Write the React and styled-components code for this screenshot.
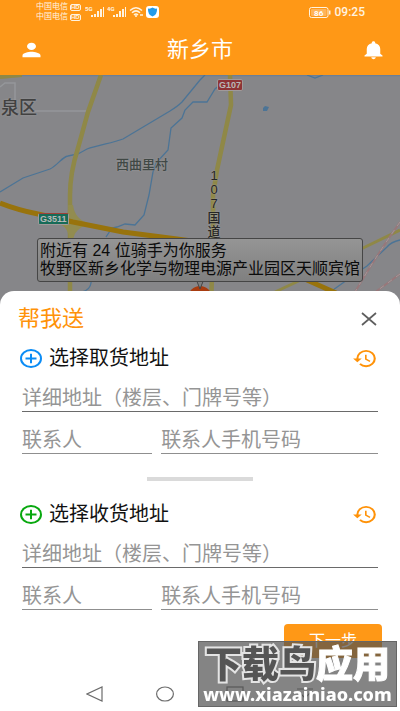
import React from "react";
import styled, { createGlobalStyle } from "styled-components";
import { MdHistory, MdNotifications, MdPerson } from "react-icons/md";

const GlobalStyle = createGlobalStyle`
  :root {
    --main: #ff9816;
    --text: #111;
    --hint: #959595;
  }
  * {
    box-sizing: border-box;
  }
  body {
    margin: 0;
    background: #fff;
    color: var(--text);
    font-family: "Liberation Sans", "Noto Sans CJK SC", sans-serif;
  }
  button,
  input {
    font-family: inherit;
  }
`;

const Screen = styled.div`
  display: flex;
  flex-direction: column;
  min-height: 100vh;
`;

/* status bar */
const StatusBar = styled.div`
  display: flex;
  align-items: center;
  justify-content: space-between;
  height: 24px;
  padding: 0 35px 0 36px;
  background: var(--main);
  color: #fff3e0;
`;
const StatusGroup = styled.div`
  display: flex;
  align-items: center;
  gap: ${(props) => props.$gap}px;
`;
const Carriers = styled.div`
  display: grid;
  margin-right: 2px;
  font-size: 8px;
  line-height: 10px;
`;
const Carrier = styled.span`
  display: flex;
  align-items: center;
  gap: 2px;
`;
const Hd = styled.span`
  border: 1px solid #fff3e0;
  border-radius: 2px;
  font-size: 6px;
  font-weight: 700;
  line-height: 5px;
`;
const Clock = styled.span`
  font-family: Roboto, sans-serif;
  font-size: 12px;
  font-weight: 500;
`;

/* header */
const Header = styled.header`
  display: grid;
  grid-template-columns: 1fr auto 1fr;
  align-items: center;
  height: 51px;
  padding: 0 13px 0 18px;
  background: var(--main);
  color: #fff;
`;
const City = styled.h1`
  margin: 0;
  padding-right: 5px;
  font-size: 22px;
  font-weight: 400;
  line-height: 30px;
`;
const IconButton = styled.button`
  display: flex;
  justify-self: ${(props) => (props.$end ? "end" : "start")};
  padding: 0;
  border: none;
  background: none;
  color: ${(props) => props.$color || "inherit"};
`;

/* map */
const Map = styled.main`
  position: relative;
  flex: 1 0 230px;
  margin-bottom: -16px;
  overflow: hidden;
  background: #868689;
`;
const MapDrawing = styled.svg`
  position: absolute;
  top: 0;
  left: 0;
  width: 100%;
  height: 100%;
`;
const Place = styled.span`
  position: absolute;
  top: ${(props) => props.$y}px;
  left: ${(props) => props.$x}px;
  color: ${(props) => props.$color || "#404845"};
  font-size: ${(props) => props.$size}px;
  line-height: 20px;
  font-weight: 500;
  text-shadow: 0 0 2px #a0a0a0;
`;
const RoadName = styled.span`
  position: absolute;
  top: 94px;
  left: 206px;
  width: 16px;
  color: #262626;
  font-size: 13px;
  font-weight: 500;
  line-height: 14px;
  text-align: center;
  text-shadow: 0 0 2px #a8a8a8;
`;
const RoadSign = styled.span`
  position: absolute;
  top: ${(props) => props.$y}px;
  left: ${(props) => props.$x}px;
  padding: 0 1px;
  border: 1px solid #a09a9a;
  border-top-color: ${(props) => props.$top || "#a09a9a"};
  border-radius: 2px;
  background: ${(props) => props.$color};
  color: #b8b8b8;
  font-size: 9px;
  font-weight: 700;
  line-height: 10px;
`;
const Bubble = styled.div`
  position: absolute;
  top: 163px;
  left: 50%;
  width: max-content;
  padding: 3px 2px;
  border: 1px solid #454545;
  border-radius: 3px;
  background: linear-gradient(#959595, #808080);
  color: #0b0b0b;
  font-size: 16px;
  line-height: 18px;
  transform: translateX(-50%);
`;

/* bottom sheet */
const Sheet = styled.section`
  position: relative;
  padding: 12px 18px 0;
  border-radius: 14px 14px 0 0;
  background: #fff;
`;
const SheetHead = styled.div`
  display: flex;
  align-items: center;
  justify-content: space-between;
  height: 32px;
  padding-right: 5px;
`;
const SheetTitle = styled.h2`
  margin: 0;
  color: #ff9208;
  font-size: 22px;
  font-weight: 400;
  line-height: 30px;
`;
const Address = styled.fieldset`
  min-width: 0;
  margin: 0;
  padding: 8px 4px 0;
  border: none;
`;
const AddressHead = styled.div`
  display: flex;
  align-items: center;
  justify-content: space-between;
  height: 30px;
  margin-left: -2px;
`;
const PickButton = styled.button`
  display: flex;
  align-items: center;
  gap: 7px;
  padding: 0;
  border: none;
  background: none;
  color: var(--text);
  font-size: 20px;
  line-height: 28px;
`;
const Fields = styled.div`
  display: grid;
  grid-template-columns: 3fr 5fr;
  column-gap: 9px;
`;
const Input = styled.input`
  grid-column: ${(props) => (props.$wide ? "1 / -1" : "auto")};
  width: 100%;
  min-width: 0;
  height: ${(props) => (props.$wide ? 39 : 42)}px;
  padding: ${(props) => (props.$wide ? 12 : 16)}px 0 0;
  border: none;
  border-bottom: 1px solid ${(props) => (props.$wide ? "#6a6a6a" : "#8f8f8f")};
  border-radius: 0;
  outline: none;
  background: transparent;
  font-size: 20px;
  line-height: 24px;
  &::placeholder {
    color: var(--hint);
    opacity: 1;
  }
`;
const Divider = styled.hr`
  width: 106px;
  height: 4px;
  margin: 23px auto 10px;
  border: none;
  background: #dadada;
`;
const Actions = styled.div`
  display: flex;
  justify-content: flex-end;
  padding-top: 14px;
`;
const NextButton = styled.button`
  width: 98px;
  height: 34px;
  padding: 0;
  border: none;
  border-radius: 4px;
  background: var(--main);
  color: #fff;
  font-size: 16px;
  line-height: 24px;
`;

const NavBar = styled.nav`
  display: flex;
  align-items: center;
  justify-content: center;
  gap: 52px;
  height: 34px;
  margin-top: 19px;
`;

const Watermark = styled.a`
  position: fixed;
  right: 3px;
  bottom: 4px;
  width: 199px;
  height: 66px;
  padding-top: 5px;
  border: 1px solid #666;
  background: rgba(80, 80, 80, 0.7);
  color: #fff;
  text-align: center;
  text-decoration: none;
  white-space: nowrap;
`;
const WatermarkName = styled.strong`
  display: block;
  font-size: 37px;
  font-weight: 900;
  line-height: 38px;
  -webkit-text-stroke: 1px #fff;
`;
const WatermarkDark = styled.span`
  color: #555;
  -webkit-text-stroke: 4px #e4e4e4;
  paint-order: stroke fill;
`;
const WatermarkUrl = styled.span`
  display: block;
  font-family: "Noto Sans", sans-serif;
  font-size: 18px;
  font-weight: 800;
  line-height: 18px;
`;

function Signal({ label }) {
  return (
    <svg width="20" height="12" viewBox="0 0 20 12" fill="#fff3e0">
      <text x="0" y="5" fontSize="6" fontWeight="700" fontFamily="Roboto, sans-serif">
        {label}
      </text>
      <path d="M6 9h2v2H6zM9 8h2v3H9zM12 5h2v6h-2zM15 3h2v8h-2zM18 1h1v10h-1z" />
    </svg>
  );
}

function Wifi() {
  return (
    <svg width="15" height="12" viewBox="0 0 15 12" fill="none" stroke="#fff3e0" strokeWidth="1.500">
      <path d="M1 4.500Q7-1 13 4.500M3 6.800Q7 3 11 6.800M5 9Q7 7 9 9" />
      <path d="M7 9v2M11 9h3" />
    </svg>
  );
}

function Shield() {
  return (
    <svg width="13" height="12" viewBox="0 0 13 12">
      <rect width="13" height="12" rx="3" fill="#fff" />
      <path d="M2 2.500Q4.500 3 6.500 1.500Q8.500 3 11 2.500Q11.500 8.500 6.500 10.500Q1.500 8.500 2 2.500Z" fill="#239bea" />
    </svg>
  );
}

function Battery() {
  return (
    <svg width="22" height="11" viewBox="0 0 22 11">
      <rect x=".5" y=".5" width="18.500" height="10" rx="2" fill="none" stroke="#fff3e0" />
      <rect x="2" y="2" width="15.500" height="7" rx="1" fill="#ffb459" />
      <rect x="20" y="3.500" width="1.500" height="4" fill="#fff3e0" />
      <text x="9.700" y="8.500" fontSize="8" fontWeight="700" fill="#fff" textAnchor="middle" fontFamily="Roboto, sans-serif">
        86
      </text>
    </svg>
  );
}

function PlusCircle({ color }) {
  return (
    <svg width="22" height="19" viewBox="0 0 22 19" fill="none" stroke={color} strokeWidth="2">
      <ellipse cx="11" cy="9.500" rx="10" ry="8.500" />
      <path d="M5.500 9.500h11M11 4.800v9.400" />
    </svg>
  );
}

function Close() {
  return (
    <svg width="16" height="14" viewBox="0 0 16 14" fill="none" stroke="#5e5e5e" strokeWidth="1.700">
      <path d="M1 1l14 12M15 1L1 13" />
    </svg>
  );
}

function MapView() {
  return (
    <Map>
      <MapDrawing viewBox="0 0 400 232" preserveAspectRatio="xMidYMin slice" fill="none">
        <g stroke="#95979a" strokeWidth="1.500">
          <path d="M0 12L5 8H15V28M35 36H89" />
        </g>
        <g stroke="#4c7496" strokeWidth="1.300">
          <path d="M0 .5H400" stroke="#6d7f95" />
          <path d="M0 117L23 103L50 94C58 90 62 82 68 81L78 79L87 74C98 70 113 68 123 64L170 36Q178 31 182 27L200 5L205 0" />
          <path d="M222 8L215 14L207 27L193 27L185 35L182 43L171 53L168 75L156 88L153 97L149 120L144 140L135 150L125 149L117 152L112 153L106 162" />
          <path d="M92 200L91 208Q90 215 82 217M307 0L315 3L323 0M400 165Q391 167 387 172L367 191L361 195L333 215" />
        </g>
        <path d="M263 33l2-2 4 1-2 4h-4z" fill="#4c7496" />
        <g stroke="#8f8847" strokeWidth="4.500">
          <path d="M101 0L88 37L78 73Q70 98 70 120V232" />
          <path d="M230 0L231 30L217 95L213 120V170L211 232" />
          <path d="M0 2L22 0" strokeWidth="4" />
          <path d="M361 174L400 155M275 217L305 203" strokeWidth="3" />
        </g>
        <path d="M68 130Q69 146 59 149Q69 152 69 166H73Q74 153 90 149Q75 145 73 130Z" fill="#928c50" />
        <g stroke="#98730c" strokeWidth="5">
          <path d="M0 128Q18 135 38 139L73 147L123 157L177 164L220 170L307 205L336 218" />
        </g>
        <g stroke="#98777a" strokeWidth="2">
          <path d="M400 147Q378 178 355 217M400 199L374 218" />
          <path d="M400 147Q378 178 355 217M400 199L374 218" stroke="#a09a9b" strokeDasharray="5 5" strokeWidth="1" />
        </g>
        <circle cx="200" cy="223" r="12" fill="#a83c10" />
        <path d="M196 204L200 214L204 204" fill="#808080" stroke="#454545" />
      </MapDrawing>
      <Place $x={1} $y={23} $size={18} $color="#414141">泉区</Place>
      <Place $x={116} $y={80} $size={13}>西曲里村</Place>
      <RoadName>1 0 7 国道</RoadName>
      <RoadSign $x={217} $y={4} $color="#8e3335">G107</RoadSign>
      <RoadSign $x={38} $y={138} $color="#176b58" $top="#a04038">G3511</RoadSign>
      <Bubble>
        附近有 24 位骑手为你服务
        <br />
        牧野区新乡化学与物理电源产业园区天顺宾馆
      </Bubble>
    </Map>
  );
}

function AddressForm({ title, color }) {
  return (
    <Address aria-label={title}>
      <AddressHead>
        <PickButton type="button">
          <PlusCircle color={color} />
          {title}
        </PickButton>
        <IconButton type="button" aria-label="历史地址" $color="#ff9208">
          <MdHistory preserveAspectRatio="none" style={{ width: 26, height: 23 }} />
        </IconButton>
      </AddressHead>
      <Fields>
        <Input $wide type="text" aria-label="详细地址" placeholder="详细地址（楼层、门牌号等）" />
        <Input type="text" aria-label="联系人" placeholder="联系人" />
        <Input type="tel" aria-label="联系人手机号码" placeholder="联系人手机号码" />
      </Fields>
    </Address>
  );
}

function App() {
  return (
    <>
      <GlobalStyle />
      <Screen>
        <StatusBar>
          <StatusGroup $gap={2}>
            <Carriers>
              <Carrier>中国电信<Hd>HD</Hd></Carrier>
              <Carrier>中国电信<Hd>HD</Hd></Carrier>
            </Carriers>
            <Signal label="5G" />
            <Signal label="4G" />
            <Wifi />
            <Shield />
          </StatusGroup>
          <StatusGroup $gap={4}>
            <Battery />
            <Clock>09:25</Clock>
          </StatusGroup>
        </StatusBar>
        <Header>
          <IconButton type="button" aria-label="我的">
            <MdPerson preserveAspectRatio="none" style={{ width: 27, height: 22 }} />
          </IconButton>
          <City>新乡市</City>
          <IconButton type="button" aria-label="消息" $end>
            <MdNotifications preserveAspectRatio="none" style={{ width: 27, height: 22 }} />
          </IconButton>
        </Header>
        <MapView />
        <Sheet>
          <SheetHead>
            <SheetTitle>帮我送</SheetTitle>
            <IconButton type="button" aria-label="关闭">
              <Close />
            </IconButton>
          </SheetHead>
          <AddressForm title="选择取货地址" color="#0b8cf5" />
          <Divider />
          <AddressForm title="选择收货地址" color="#08a80f" />
          <Actions>
            <NextButton type="submit">下一步</NextButton>
          </Actions>
          <NavBar>
            <IconButton type="button" aria-label="返回">
              <svg width="18" height="16" viewBox="0 0 18 16" fill="none" stroke="#6c6c6c" strokeWidth="1.200">
                <path d="M16 1V15L1 8Z" />
              </svg>
            </IconButton>
            <IconButton type="button" aria-label="主页">
              <svg width="18" height="16" viewBox="0 0 18 16" fill="none" stroke="#6c6c6c" strokeWidth="1.200">
                <ellipse cx="9" cy="8" rx="8.400" ry="7" />
              </svg>
            </IconButton>
            <IconButton type="button" aria-label="最近任务">
              <svg width="18" height="16" viewBox="0 0 18 16" fill="none" stroke="#6c6c6c" strokeWidth="1.200">
                <rect x="1" y="1" width="16" height="14" />
              </svg>
            </IconButton>
            <IconButton type="button" aria-label="收起">
              <svg width="18" height="16" viewBox="0 0 18 16" fill="none" stroke="#6c6c6c" strokeWidth="1.200">
                <path d="M1 3H17M4 7L9 12L14 7" />
              </svg>
            </IconButton>
          </NavBar>
        </Sheet>
      </Screen>
      <Watermark href="#">
        <WatermarkName>
          <WatermarkDark>下载鸟</WatermarkDark>应用
        </WatermarkName>
        <WatermarkUrl>www.xiazainiao.com</WatermarkUrl>
      </Watermark>
    </>
  );
}

export default App;
